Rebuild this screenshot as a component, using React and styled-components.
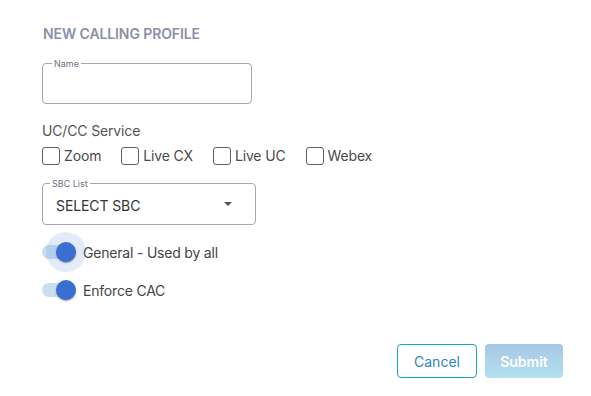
import React from "react";
import styled, { createGlobalStyle } from "styled-components";

const Global = createGlobalStyle`
  html, body { margin: 0; padding: 0; background: #fff; }
  body { font-family: Inter, "Noto Sans", sans-serif; }
  * { box-sizing: border-box; }
`;

const Page = styled.div`
  width: 591px;
  height: 396px;
  padding: 24px 28px 0 42px;
  display: flex;
  flex-direction: column;
  background: #fff;
`;

const Title = styled.h2`
  margin: 0 0 0 1px;
  font-size: 14px;
  line-height: 20px;
  font-weight: 600;
  letter-spacing: -0.1px;
  color: #8b8fa7;
`;

const Field = styled.div`
  position: relative;
  width: ${(p) => p.$w}px;
  height: ${(p) => p.$h}px;
  margin-top: ${(p) => p.$mt}px;
  border: 1px solid #a4a7b2;
  border-radius: 4px;
  display: flex;
  align-items: center;
  padding: 0 13px;
`;

const FieldLabel = styled.span`
  position: absolute;
  top: -6px;
  left: ${(p) => p.$left}px;
  padding: 0 2px;
  background: #fff;
  font-size: 9px;
  line-height: 11px;
  color: #6f7280;
`;

const SelectValue = styled.span`
  flex: 1;
  font-size: 14px;
  letter-spacing: -0.1px;
  color: #333;
  padding-top: 2px;
`;

const Caret = styled.span`
  width: 0;
  height: 0;
  border-left: 4px solid transparent;
  border-right: 4px solid transparent;
  border-top: 4px solid #555;
  margin-right: 10px;
`;

const SectionLabel = styled.div`
  margin-top: 18px;
  font-size: 14px;
  line-height: 18px;
  letter-spacing: -0.15px;
  color: #555;
`;

const CheckRow = styled.div`
  display: flex;
  gap: 20px;
  margin-top: 7px;
`;

const CheckItem = styled.label`
  display: flex;
  align-items: center;
  gap: 4px;
  font-size: 14px;
  line-height: 18px;
  letter-spacing: -0.15px;
  color: #4a4a4a;
`;

const Box = styled.span`
  width: 18px;
  height: 18px;
  border: 1.5px solid #5f6166;
  border-radius: 3px;
`;

const SwitchRow = styled.div`
  display: flex;
  align-items: center;
  height: 38px;
  margin-top: ${(p) => p.$mt}px;
  font-size: 14px;
  letter-spacing: -0.2px;
  color: #444;
`;

const SwitchWrap = styled.span`
  position: relative;
  width: 34px;
  height: 14px;
  margin-right: 7px;
`;

const Track = styled.span`
  position: absolute;
  inset: 0;
  border-radius: 7px;
  background: #c9def1;
`;

const Halo = styled.span`
  position: absolute;
  width: 40px;
  height: 40px;
  border-radius: 50%;
  left: 4px;
  top: -13px;
  background: rgba(59, 111, 212, 0.14);
`;

const Thumb = styled.span`
  position: absolute;
  width: 20px;
  height: 20px;
  border-radius: 50%;
  left: 14px;
  top: -3px;
  background: #3a6fd2;
  box-shadow: 0 2px 1px -1px rgba(0,0,0,0.2), 0 1px 1px rgba(0,0,0,0.14), 0 1px 3px rgba(0,0,0,0.12);
`;

const Actions = styled.div`
  display: flex;
  justify-content: flex-end;
  gap: 8px;
  margin-top: 35px;
`;

const Button = styled.button`
  height: 34px;
  width: ${(p) => p.$w}px;
  border-radius: 4px;
  font-family: Inter, sans-serif;
  font-size: 14px;
  border: ${(p) => (p.$primary ? "none" : "1px solid #1aa3c4")};
  background: ${(p) =>
    p.$primary ? "linear-gradient(180deg, #a9c6e4 0%, #b1e2ee 100%)" : "#fff"};
  color: ${(p) => (p.$primary ? "#fff" : "#2a86c4")};
  font-weight: ${(p) => (p.$primary ? 600 : 400)};
  padding: 0;
`;

const Switch = ({ halo }) => (
  <SwitchWrap>
    <Track />
    {halo && <Halo />}
    <Thumb />
  </SwitchWrap>
);

export default function App() {
  return (
    <>
      <Global />
      <Page>
        <Title>NEW CALLING PROFILE</Title>
        <Field $w={210} $h={41} $mt={19}>
          <FieldLabel $left={9}>Name</FieldLabel>
        </Field>
        <SectionLabel>UC/CC Service</SectionLabel>
        <CheckRow>
          {["Zoom", "Live CX", "Live UC", "Webex"].map((t) => (
            <CheckItem key={t}>
              <Box />
              {t}
            </CheckItem>
          ))}
        </CheckRow>
        <Field $w={214} $h={42} $mt={18}>
          <FieldLabel $left={7}>SBC List</FieldLabel>
          <SelectValue>SELECT SBC</SelectValue>
          <Caret />
        </Field>
        <SwitchRow $mt={8}>
          <Switch halo />
          General - Used by all
        </SwitchRow>
        <SwitchRow $mt={0}>
          <Switch />
          Enforce CAC
        </SwitchRow>
        <Actions>
          <Button $w={80}>Cancel</Button>
          <Button $w={78} $primary>Submit</Button>
        </Actions>
      </Page>
    </>
  );
}
